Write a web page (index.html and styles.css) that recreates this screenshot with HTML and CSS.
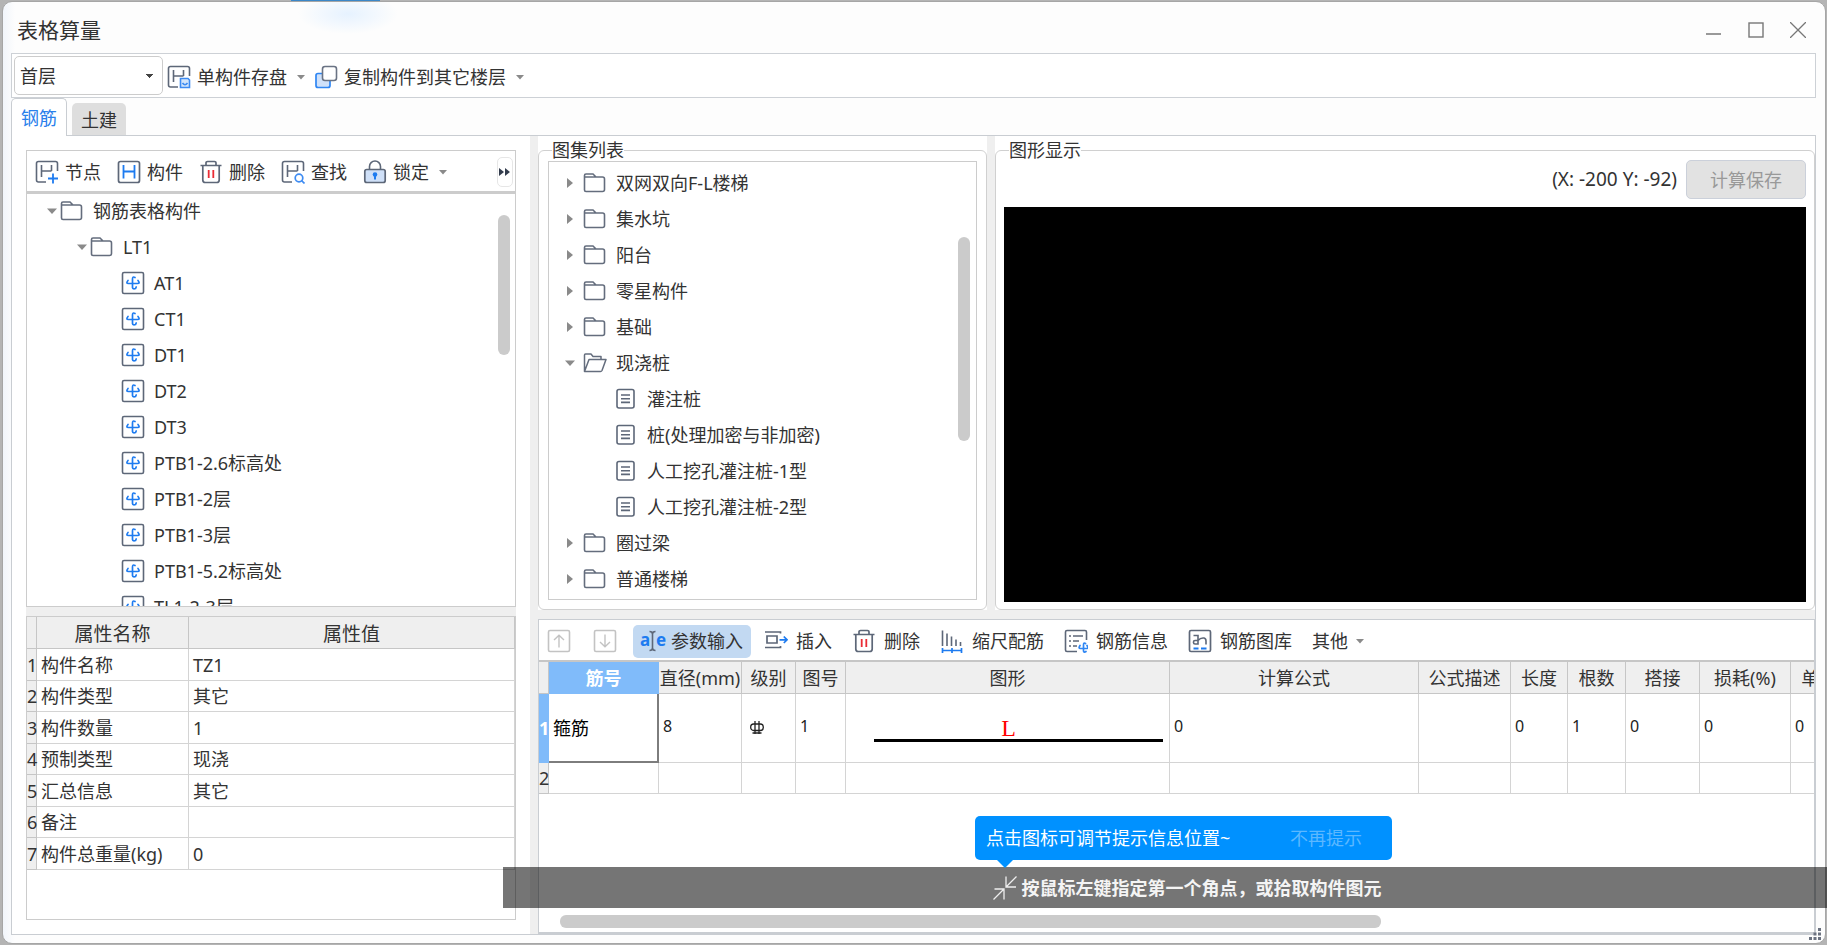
FILE: index.html
```html
<!DOCTYPE html>
<html lang="zh-CN">
<head>
<meta charset="utf-8">
<title>表格算量</title>
<link rel="stylesheet" href="styles.css">
</head>
<body>
<svg class="sprite" aria-hidden="true">
  <defs>
    <symbol id="i-save" viewBox="0 0 24 24"><g fill="none" stroke="#5d6778" stroke-width="1.6"><path d="M11 22H3.500Q1.500 22 1.500 20V3.500Q1.500 1.500 3.500 1.500H20.500Q22.500 1.500 22.500 3.500V11"/><path d="M6.500 5V17M16.500 5V11M6.500 11H16.500"/></g><path d="M13.500 13.500H21L22.500 15V22.500H13.500Z" fill="#d3e5fb" stroke="#3d8bf2" stroke-width="1.600"/><path d="M15.500 18Q18 21.500 20.500 18" fill="none" stroke="#3d8bf2" stroke-width="1.600"/></symbol>
    <symbol id="i-copy" viewBox="0 0 24 24"><rect x="2" y="8.500" width="14" height="14" rx="2" fill="#cfe1fa" stroke="#2f86f3" stroke-width="1.700"/><rect x="8.500" y="1.500" width="14" height="14" rx="2.500" fill="#fff" stroke="#6a7384" stroke-width="1.600"/></symbol>
    <symbol id="i-node" viewBox="0 0 24 24"><g fill="none" stroke="#5d6778" stroke-width="1.600"><path d="M11 22H3.500Q1.500 22 1.500 20V3.500Q1.500 1.500 3.500 1.500H20.500Q22.500 1.500 22.500 3.500V11"/><path d="M6.500 5V17M16.500 5V11M6.500 11H16.500"/></g><path d="M18 13.500V23.500M13 18.500H23" stroke="#1d7bf0" stroke-width="1.800"/></symbol>
    <symbol id="i-comp" viewBox="0 0 24 24"><rect x="1.500" y="1.500" width="21" height="21" rx="2" fill="none" stroke="#5d6778" stroke-width="1.700"/><path d="M6.500 5V18.500M17.500 5V18.500M6.500 11.500H17.500" fill="none" stroke="#1d7bf0" stroke-width="1.800"/></symbol>
    <symbol id="i-trash" viewBox="0 0 24 24"><g fill="none" stroke="#5d6778" stroke-width="1.700"><path d="M1.500 5.500H22.500M7 5V2.700Q7 1.500 8.500 1.500H15.500Q17 1.500 17 2.700V5"/><path d="M3.800 5.500V20Q3.800 22.500 6.300 22.500H17.700Q20.200 22.500 20.200 20V5.500"/></g><path d="M9.700 10V18M14.300 10V18" stroke="#ea2c35" stroke-width="1.800"/></symbol>
    <symbol id="i-find" viewBox="0 0 24 24"><g fill="none" stroke="#5d6778" stroke-width="1.600"><path d="M11 22H3.500Q1.500 22 1.500 20V3.500Q1.500 1.500 3.500 1.500H20.500Q22.500 1.500 22.500 3.500V11"/><path d="M6.500 5V17M16.500 5V11M6.500 11H16.500"/></g><circle cx="18" cy="18" r="3.800" fill="#fff" stroke="#3d8bf2" stroke-width="1.700"/><path d="M20.500 20.500L23.500 23.500" stroke="#3d8bf2" stroke-width="1.700"/></symbol>
    <symbol id="i-lock" viewBox="0 0 24 24"><path d="M6.500 9V6.500A5.500 5.500 0 0 1 17.500 6.500V9" fill="none" stroke="#5d6778" stroke-width="1.600"/><rect x="1.800" y="9.500" width="20.400" height="13" rx="2" fill="#cfe0f8" stroke="#5d6778" stroke-width="1.700"/><circle cx="12" cy="14.500" r="2.300" fill="#1d7bf0"/><path d="M12 15V19.500" stroke="#1d7bf0" stroke-width="2"/></symbol>
    <symbol id="i-folder" viewBox="0 0 24 24"><path d="M1.500 19V4.500Q1.500 3 3 3H10L13 6H19.500Q21.500 6 21.500 8V18.500Q21.500 20.500 19.500 20.500H3Q1.500 20.500 1.500 19ZM1.500 6H13" fill="none" stroke="#646d7d" stroke-width="1.600"/></symbol>
    <symbol id="i-open" viewBox="0 0 24 24"><path d="M1.500 20.500V4Q1.500 3 2.500 3H8L10 5.500H18V8.500M1.500 20.500L6 8.500H23L19 19.500Q18.500 20.500 17.500 20.500Z" fill="none" stroke="#646d7d" stroke-width="1.500" stroke-linejoin="round"/></symbol>
    <symbol id="i-doc" viewBox="0 0 24 24"><rect x="3" y="2.500" width="17" height="18.500" rx="2" fill="none" stroke="#5d6778" stroke-width="1.600"/><path d="M7 8H16M7 11.700H16M7 15.400H16" stroke="#5d6778" stroke-width="1.600"/></symbol>
    <symbol id="i-item" viewBox="0 0 24 24"><rect x="1.500" y="1.500" width="21" height="21" rx="1.500" fill="none" stroke="#5d6778" stroke-width="1.600"/><path d="M14 6.500Q11.500 5 11.500 8V16.500Q12 18.500 14.500 17.500L15.200 16M7 9.500Q4.500 12.500 7.500 12.500H16.500Q19.500 12.500 17 9.500" fill="none" stroke="#1d7bf0" stroke-width="1.700" stroke-linecap="round"/></symbol>
    <symbol id="i-up" viewBox="0 0 24 24"><rect x="1.500" y="1.500" width="21" height="21" rx="1.500" fill="none" stroke="#c3c3c3" stroke-width="1.600"/><path d="M12 18.500V6.500M7 11L12 6.200L17 11" fill="none" stroke="#c3c3c3" stroke-width="1.400"/></symbol>
    <symbol id="i-down" viewBox="0 0 24 24"><rect x="1.500" y="1.500" width="21" height="21" rx="1.500" fill="none" stroke="#c3c3c3" stroke-width="1.600"/><path d="M12 5.500V17.500M7 13L12 17.800L17 13" fill="none" stroke="#c3c3c3" stroke-width="1.400"/></symbol>
    <symbol id="i-insert" viewBox="0 0 24 24"><path d="M1 3H16.500V4.500M1 18.500H16.500V17M3 7H13V14H3Z" fill="none" stroke="#5d6778" stroke-width="1.700"/><path d="M15.500 10.800H23M19.800 7.500L23 10.800L19.800 14" fill="none" stroke="#1d7bf0" stroke-width="1.700"/></symbol>
    <symbol id="i-scale" viewBox="0 0 24 24"><path d="M2.500 1.500V17M7 4.500V17M11.500 7.500V17M16 10.500V17M20.500 13V17" stroke="#5d6778" stroke-width="1.600"/><path d="M2 21.500H22M2.500 19V24M12 19V24M21.500 19V24" stroke="#1d7bf0" stroke-width="1.700"/></symbol>
    <symbol id="i-info" viewBox="0 0 24 24"><path d="M13 22.500H3Q1.500 22.500 1.500 21V3Q1.500 1.500 3 1.500H21Q22.500 1.500 22.500 3V11M5 7H7M9 7H19M5 12H7M9 12H15M5 17H7M9 17H13" fill="none" stroke="#5d6778" stroke-width="1.600"/><path d="M21.500 14.500Q19.500 13 19.500 16V22Q20 24 22 22.500M16 16.500Q14 19.500 16.500 19.500H22.500Q25 19.500 23 16.500" fill="none" stroke="#2f86f3" stroke-width="1.700" stroke-linecap="round"/></symbol>
    <symbol id="i-lib" viewBox="0 0 24 24"><rect x="1.500" y="1.500" width="21" height="21" rx="1.500" fill="none" stroke="#5d6778" stroke-width="1.700"/><path d="M5.500 6.500H10V15H7Q5.500 15 5.500 13.500V13Q5.500 11.500 7 11.500H10M10 11.500Q12.500 8.500 16 9Q18 9.500 18 12V15.500" fill="none" stroke="#5d6778" stroke-width="1.600"/><path d="M5.500 19.500H10.500M13 19.500H18.500" stroke="#1d7bf0" stroke-width="1.800"/></symbol>
    <symbol id="i-shrink" viewBox="0 0 24 24"><path d="M23.500 .5L13.500 10.500M13 .5V11H23M.5 23.500L10.500 13.500M1.500 13H11V23.500" fill="none" stroke="#eee" stroke-width="1.300"/></symbol>
    <symbol id="i-tri-down" viewBox="0 0 10 10"><path d="M0 2.500H10L5 8Z" fill="#8a8a8a"/></symbol>
    <symbol id="i-tri-right" viewBox="0 0 10 10"><path d="M2 0L8 5L2 10Z" fill="#8a8a8a"/></symbol>
  </defs>
</svg>

<div class="window">
  <header class="titlebar">
    <h1 class="title">表格算量</h1>
    <div class="controls">
      <button class="control" aria-label="最小化"><svg viewBox="0 0 16 16"><path d="M0 12H15" stroke="#777" stroke-width="1.500"/></svg></button>
      <button class="control" aria-label="最大化"><svg viewBox="0 0 16 16"><rect x="1" y="1" width="14" height="14" fill="none" stroke="#777" stroke-width="1.400"/></svg></button>
      <button class="control" aria-label="关闭"><svg viewBox="0 0 16 16"><path d="M0 0L16 16M16 0L0 16" stroke="#777" stroke-width="1.300"/></svg></button>
    </div>
  </header>

  <div class="mainbar">
    <select class="floor" aria-label="楼层"><option>首层</option></select>
    <button class="tool"><svg class="icon"><use href="#i-save"/></svg>单构件存盘<svg class="caret"><use href="#i-tri-down"/></svg></button>
    <button class="tool"><svg class="icon"><use href="#i-copy"/></svg>复制构件到其它楼层<svg class="caret"><use href="#i-tri-down"/></svg></button>
  </div>

  <nav class="tabs">
    <button class="tab tab-active">钢筋</button>
    <button class="tab">土建</button>
  </nav>

  <main class="page">
    <section class="side">
      <div class="sidebar-tools">
        <button class="tool"><svg class="icon"><use href="#i-node"/></svg>节点</button>
        <button class="tool"><svg class="icon"><use href="#i-comp"/></svg>构件</button>
        <button class="tool"><svg class="icon"><use href="#i-trash"/></svg>删除</button>
        <button class="tool"><svg class="icon"><use href="#i-find"/></svg>查找</button>
        <button class="tool"><svg class="icon"><use href="#i-lock"/></svg>锁定<svg class="caret"><use href="#i-tri-down"/></svg></button>
        <button class="more" aria-label="更多"><svg viewBox="0 0 12 10"><path d="M0 1L5 5L0 9ZM6 1L11 5L6 9Z" fill="#333c4d"/></svg></button>
      </div>
      <div class="tree-box">
        <ul class="tree">
          <li class="row level-1"><button class="twist" aria-label="折叠"><svg><use href="#i-tri-down"/></svg></button><svg class="icon"><use href="#i-folder"/></svg><span>钢筋表格构件</span></li>
          <li class="row level-2"><button class="twist" aria-label="折叠"><svg><use href="#i-tri-down"/></svg></button><svg class="icon"><use href="#i-folder"/></svg><span>LT1</span></li>
          <li class="row level-3"><svg class="icon"><use href="#i-item"/></svg><span>AT1</span></li>
          <li class="row level-3"><svg class="icon"><use href="#i-item"/></svg><span>CT1</span></li>
          <li class="row level-3"><svg class="icon"><use href="#i-item"/></svg><span>DT1</span></li>
          <li class="row level-3"><svg class="icon"><use href="#i-item"/></svg><span>DT2</span></li>
          <li class="row level-3"><svg class="icon"><use href="#i-item"/></svg><span>DT3</span></li>
          <li class="row level-3"><svg class="icon"><use href="#i-item"/></svg><span>PTB1-2.6标高处</span></li>
          <li class="row level-3"><svg class="icon"><use href="#i-item"/></svg><span>PTB1-2层</span></li>
          <li class="row level-3"><svg class="icon"><use href="#i-item"/></svg><span>PTB1-3层</span></li>
          <li class="row level-3"><svg class="icon"><use href="#i-item"/></svg><span>PTB1-5.2标高处</span></li>
          <li class="row level-3"><svg class="icon"><use href="#i-item"/></svg><span>TL1-2-3层</span></li>
        </ul>
        <div class="thumb thumb-side"></div>
      </div>
      <div class="split-h"></div>
      <div class="props">
        <table class="grid props-grid">
          <colgroup><col class="c-num"><col class="c-name"><col></colgroup>
          <thead><tr><th></th><th>属性名称</th><th>属性值</th></tr></thead>
          <tbody>
            <tr><th>1</th><td>构件名称</td><td>TZ1</td></tr>
            <tr><th>2</th><td>构件类型</td><td>其它</td></tr>
            <tr><th>3</th><td>构件数量</td><td>1</td></tr>
            <tr><th>4</th><td>预制类型</td><td>现浇</td></tr>
            <tr><th>5</th><td>汇总信息</td><td>其它</td></tr>
            <tr><th>6</th><td>备注</td><td></td></tr>
            <tr><th>7</th><td>构件总重量(kg)</td><td>0</td></tr>
          </tbody>
        </table>
      </div>
    </section>

    <div class="split-v"></div>

    <div class="work">
      <div class="upper">
        <fieldset class="group atlas">
          <legend>图集列表</legend>
          <div class="atlas-box">
            <ul class="tree">
              <li class="row folder"><button class="twist" aria-label="展开"><svg><use href="#i-tri-right"/></svg></button><svg class="icon"><use href="#i-folder"/></svg><span>双网双向F-L楼梯</span></li>
              <li class="row folder"><button class="twist" aria-label="展开"><svg><use href="#i-tri-right"/></svg></button><svg class="icon"><use href="#i-folder"/></svg><span>集水坑</span></li>
              <li class="row folder"><button class="twist" aria-label="展开"><svg><use href="#i-tri-right"/></svg></button><svg class="icon"><use href="#i-folder"/></svg><span>阳台</span></li>
              <li class="row folder"><button class="twist" aria-label="展开"><svg><use href="#i-tri-right"/></svg></button><svg class="icon"><use href="#i-folder"/></svg><span>零星构件</span></li>
              <li class="row folder"><button class="twist" aria-label="展开"><svg><use href="#i-tri-right"/></svg></button><svg class="icon"><use href="#i-folder"/></svg><span>基础</span></li>
              <li class="row folder"><button class="twist" aria-label="折叠"><svg><use href="#i-tri-down"/></svg></button><svg class="icon"><use href="#i-open"/></svg><span>现浇桩</span></li>
              <li class="row leaf"><svg class="icon"><use href="#i-doc"/></svg><span>灌注桩</span></li>
              <li class="row leaf"><svg class="icon"><use href="#i-doc"/></svg><span>桩(处理加密与非加密)</span></li>
              <li class="row leaf"><svg class="icon"><use href="#i-doc"/></svg><span>人工挖孔灌注桩-1型</span></li>
              <li class="row leaf"><svg class="icon"><use href="#i-doc"/></svg><span>人工挖孔灌注桩-2型</span></li>
              <li class="row folder"><button class="twist" aria-label="展开"><svg><use href="#i-tri-right"/></svg></button><svg class="icon"><use href="#i-folder"/></svg><span>圈过梁</span></li>
              <li class="row folder"><button class="twist" aria-label="展开"><svg><use href="#i-tri-right"/></svg></button><svg class="icon"><use href="#i-folder"/></svg><span>普通楼梯</span></li>
            </ul>
            <div class="thumb thumb-atlas"></div>
          </div>
        </fieldset>
        <div class="split-v"></div>
        <fieldset class="group view">
          <legend>图形显示</legend>
          <div class="view-head">
            <output>(X: -200 Y: -92)</output>
            <button class="calc" disabled>计算保存</button>
          </div>
          <div class="canvas"></div>
        </fieldset>
      </div>
      <div class="split-h"></div>
      <section class="rebar">
        <div class="rebar-tools">
          <div class="moves">
            <button class="tool" aria-label="上移" disabled><svg class="icon"><use href="#i-up"/></svg></button>
            <button class="tool" aria-label="下移" disabled><svg class="icon"><use href="#i-down"/></svg></button>
          </div>
          <button class="tool tool-on"><svg class="icon" viewBox="0 0 24 24"><text class="glyph" x="-1" y="17">a</text><text class="glyph" x="15" y="17">e</text><path d="M8.500 2.500Q11.500 2.500 11.500 5V19Q11.500 21.500 8.500 21.500M14.500 2.500Q11.500 2.500 11.500 5M11.500 19Q11.500 21.500 14.500 21.500" fill="none" stroke="#5d6778" stroke-width="1.600"/></svg>参数输入</button>
          <button class="tool"><svg class="icon"><use href="#i-insert"/></svg>插入</button>
          <button class="tool"><svg class="icon"><use href="#i-trash"/></svg>删除</button>
          <button class="tool"><svg class="icon"><use href="#i-scale"/></svg>缩尺配筋</button>
          <button class="tool"><svg class="icon"><use href="#i-info"/></svg>钢筋信息</button>
          <button class="tool"><svg class="icon"><use href="#i-lib"/></svg>钢筋图库</button>
          <button class="tool">其他<svg class="caret"><use href="#i-tri-down"/></svg></button>
        </div>
        <div class="rebar-scroll">
          <table class="grid rebar-grid">
            <colgroup><col class="c-num"><col class="c-bar"><col class="c-dia"><col class="c-grade"><col class="c-fig"><col class="c-shape"><col class="c-formula"><col class="c-desc"><col class="c-len"><col class="c-count"><col class="c-lap"><col class="c-loss"><col class="c-unit"></colgroup>
            <thead><tr><th></th><th class="picked">筋号</th><th>直径(mm)</th><th>级别</th><th>图号</th><th>图形</th><th>计算公式</th><th>公式描述</th><th>长度</th><th>根数</th><th>搭接</th><th>损耗(%)</th><th>单重(kg)</th></tr></thead>
            <tbody>
              <tr class="first">
                <th class="picked">1</th><td class="focus">箍筋</td><td>8</td>
                <td class="grade"><svg viewBox="0 0 14 14" role="img" aria-label="三级钢"><path d="M5 0V13M9 0V13M2.500 12H11.500" fill="none" stroke="#222" stroke-width="1.300"/><rect x=".7" y="3" width="12.600" height="6.500" rx="3" fill="none" stroke="#222" stroke-width="1.300"/></svg></td>
                <td>1</td><td class="shape"><span class="bar">L</span></td><td>0</td><td></td><td>0</td><td>1</td><td>0</td><td>0</td><td>0</td>
              </tr>
              <tr><th>2</th><td></td><td></td><td></td><td></td><td></td><td></td><td></td><td></td><td></td><td></td><td></td><td></td></tr>
            </tbody>
          </table>
        </div>
        <div class="hbar"><div class="hthumb"></div></div>
      </section>
    </div>
  </main>
  <svg class="grip" viewBox="0 0 12 12" aria-hidden="true"><path d="M9 0h3v3h-3zM9 4.500h3v3h-3zM9 9h3v3h-3zM4.500 4.500h3v3h-3zM4.500 9h3v3h-3zM0 9h3v3h-3z" fill="#6b7280"/></svg>
</div>

<div class="hint">
  <div class="tip"><span>点击图标可调节提示信息位置~</span><button class="dismiss">不再提示</button></div>
  <svg class="icon"><use href="#i-shrink"/></svg>
  <span>按鼠标左键指定第一个角点，或拾取构件图元</span>
</div>
</body>
</html>
```

FILE: styles.css
```css
* { box-sizing: border-box; }

body {
  margin: 0;
  height: 100vh;
  padding: 1px 1px 1px 2px;
  overflow: hidden;
  position: relative;
  background: #b4b4b4 linear-gradient(#3b87c8, #3b87c8) no-repeat 291px 0 / 89px 2px;
  font: 18px/24px "Noto Sans", "Noto Sans CJK SC", sans-serif;
  color: #333;
}

button, select {
  font: inherit;
  color: inherit;
  background: none;
  border: 0;
  padding: 0;
  white-space: nowrap;
}

.sprite { position: absolute; width: 0; height: 0; }
.icon { width: 24px; height: 24px; flex: none; overflow: visible; }
.caret { width: 8px; height: 8px; flex: none; }

.window {
  height: 100%;
  display: flex;
  flex-direction: column;
  position: relative;
  padding: 0 9px 8px 8px;
  border: 1px solid #a6a6a6;
  border-radius: 10px;
  background:
    radial-gradient(ellipse 50px 20px at 345px 12px, #e6f2ff, transparent),
    linear-gradient(90deg, #f1f5fb, #fdfdfd 12px);
}

.titlebar {
  height: 51px;
  flex: none;
  display: flex;
  align-items: center;
  justify-content: space-between;
  padding: 4px 2px 0 6px;
}
.title { margin: 0; font-size: 21px; line-height: 28px; font-weight: 400; }
.controls { display: flex; gap: 10px; }
.control { width: 32px; height: 32px; display: flex; align-items: center; justify-content: center; }
.control svg { width: 16px; height: 16px; }

.mainbar {
  height: 45px;
  flex: none;
  display: flex;
  align-items: center;
  padding-left: 2px;
  border: 1px solid #cdd1d6;
  background: #fff;
}
.floor {
  width: 149px;
  height: 39px;
  margin-right: 4px;
  padding: 0 10px 0 5px;
  border: 1px solid #ccc;
  border-radius: 5px;
  appearance: none;
  background: #fff conic-gradient(from -45deg at 50% 100%, #444 0 90deg, transparent 90deg) no-repeat right 9px center / 7px 4px;
}

.tool { display: flex; align-items: center; gap: 6px; }
.mainbar .tool { margin-right: 9px; padding-top: 2px; }
.mainbar .caret { margin-left: 4px; }

.tabs { height: 37px; flex: none; display: flex; align-items: flex-end; gap: 5px; }
.tab { height: 32px; padding: 2px 9px 0; border-radius: 5px 5px 0 0; background: #dedede; }
.tab-active {
  position: relative;
  height: 38px;
  margin-bottom: -1px;
  padding: 0 9px;
  border: 1px solid #c9cdd2;
  border-bottom: 0;
  background: #fff;
  color: #2a80eb;
}

.page {
  flex: 1;
  min-height: 0;
  display: flex;
  border: 1px solid #c9cdd2;
  background: #fff;
}

.split-v { width: 8px; flex: none; background: #efefef; }
.split-h { height: 9px; flex: none; background: #efefef; }

.side {
  width: 518px;
  flex: none;
  display: flex;
  flex-direction: column;
  padding: 14px;
}
.sidebar-tools {
  height: 42px;
  flex: none;
  display: flex;
  align-items: center;
  gap: 16px;
  padding: 2px 2px 0 8px;
  border: 1px solid #ccc;
}
.more {
  width: 16px;
  height: 30px;
  margin-left: auto;
  border: 1px solid #e6e6e6;
  border-radius: 5px;
}
.more svg { width: 12px; height: 10px; display: block; margin: auto; }
.sidebar-tools .caret { margin-left: 4px; }

.tree-box {
  flex: 1;
  min-height: 0;
  overflow: hidden;
  position: relative;
  border: 1px solid #ccc;
  border-top-width: 2px;
}
.tree { margin: 0; padding: 0; list-style: none; }
.tree-box .tree { margin-top: -1px; }
.row { height: 36px; display: flex; align-items: center; gap: 9px; white-space: nowrap; }
.twist { width: 17px; height: 20px; flex: none; margin-right: -9px; display: flex; align-items: center; justify-content: center; }
.twist svg { width: 10px; height: 10px; }
.level-1 { padding-left: 16px; }
.level-2 { padding-left: 46px; }
.level-3 { padding-left: 94px; }

.thumb { position: absolute; width: 12px; border-radius: 6px; background: #cbcbcb; }
.thumb-side { right: 5px; top: 21px; height: 140px; }
.thumb-atlas { right: 6px; top: 75px; height: 204px; }

.props { height: 304px; flex: none; border: 1px solid #ccc; }

.grid { table-layout: fixed; border-collapse: separate; border-spacing: 0; }
.grid th, .grid td { height: 32px; padding: 0; border: solid #d4d4d4; border-width: 0 1px 1px 0; overflow: hidden; white-space: nowrap; }
.grid th { background: #efefef; font-weight: 400; border-color: #c6c6c6; }
.grid td { padding-left: 4px; text-align: left; }
.grid tbody th { overflow: visible; }
.c-num { width: 10px; }
.c-name { width: 152px; }
.props-grid { width: 100%; }
.props-grid thead th { padding-top: 2px; font-size: 19px; }
.props-grid tbody th, .props-grid tbody td { height: 31px; }
.props-grid tbody tr:nth-child(odd) > * { height: 32px; }

.work { flex: 1; min-width: 0; display: flex; flex-direction: column; }
.upper { flex: 1; min-height: 0; display: flex; }

.group {
  min-width: 0;
  margin: 4px 0 0;
  padding: 1px 9px 9px;
  border: 1px solid #d0d0d0;
  border-radius: 6px;
}
.group legend { padding: 0; margin-left: 5px; line-height: 20px; }
.atlas { width: 449px; flex: none; }
.atlas legend { margin-left: 4px; }
.atlas-box {
  height: 100%;
  position: relative;
  overflow: hidden;
  padding-top: 3px;
  border: 1px solid #ccc;
}
.folder { padding-left: 12px; }
.folder .twist { margin-right: -4px; }
.leaf { padding-left: 65px; }

.view { flex: 1; padding: 0 8px 7px; }
.view-head { height: 47px; display: flex; align-items: flex-start; justify-content: flex-end; gap: 9px; }
.view-head output { padding-top: 7px; font-size: 19px; }
.calc {
  width: 120px;
  height: 39px;
  border: 1px solid #cbd0da;
  border-radius: 5px;
  background: #e2e2e2;
  color: #999;
}
.canvas { height: calc(100% - 47px); background: #000; }

.rebar {
  height: 315px;
  flex: none;
  display: flex;
  flex-direction: column;
  border: 1px solid #c9cdd2;
  border-bottom-width: 2px;
}
.rebar-tools {
  height: 42px;
  flex: none;
  display: flex;
  align-items: center;
  padding: 2px 0 0 8px;
  border-bottom: 2px solid #c6c6c6;
}
.moves { display: flex; gap: 22px; margin-right: 16px; }
.rebar-tools > .tool { height: 33px; gap: 8px; padding: 0 10px; }
.rebar-tools > .tool-on { gap: 6px; padding: 0 8px; margin-right: 3px; border-radius: 5px; background: #c2d9f2; }
.glyph { font: 700 17px "Noto Sans", sans-serif; fill: #1d7bf0; }

.rebar-scroll { flex: 1; min-height: 0; overflow: hidden; }
.rebar-grid { width: 1341px; }
.rebar-grid tbody td { color: #222; font-size: 16px; }
.rebar-grid .first > * { height: 69px; }
.rebar-grid .first td { padding-bottom: 4px; }
.rebar-grid tbody tr:last-child > * { height: 31px; }
.rebar-grid .picked { background: #80bbfa; color: #fff; font-weight: 700; border-color: #80bbfa; }
.rebar-grid .first .focus { padding-bottom: 0; font-size: 18px; color: #000; border: solid #7d7d7d; border-width: 0 2px 2px 0; }
.rebar-grid .first .grade { padding-bottom: 0; }
.grade svg { width: 14px; height: 14px; margin-left: 4px; display: block; }
.rebar-grid .first .shape { padding: 0 6px 0 28px; }
.bar {
  display: block;
  margin-top: 2px;
  border-bottom: 3px solid #000;
  font: 24px/22px "Liberation Serif", serif;
  color: #f00;
  text-align: center;
  padding-right: 20px;
}
.c-bar { width: 110px; }
.c-dia { width: 83px; }
.c-grade { width: 54px; }
.c-fig { width: 50px; }
.c-shape { width: 324px; }
.c-formula { width: 249px; }
.c-desc { width: 92px; }
.c-len { width: 57px; }
.c-count { width: 58px; }
.c-lap { width: 74px; }
.c-loss { width: 91px; }
.c-unit { width: 89px; }

.hbar { height: 17px; flex: none; padding: 0 433px 4px 21px; }
.hthumb { height: 13px; border-radius: 6px; background: #cbcbcb; }

.grip { position: absolute; right: 4px; bottom: 3px; width: 12px; height: 12px; }

.hint {
  position: absolute;
  left: 503px;
  right: 0;
  bottom: 37px;
  height: 41px;
  display: flex;
  align-items: center;
  justify-content: center;
  gap: 5px;
  padding-left: 44px;
  background: rgba(0, 0, 0, .54);
  color: #f4f4f4;
  font-weight: 700;
}
.tip {
  position: absolute;
  left: 472px;
  bottom: 48px;
  width: 417px;
  height: 44px;
  display: flex;
  align-items: center;
  justify-content: space-between;
  padding: 0 30px 0 11px;
  border-radius: 5px;
  background: #0091ff;
  color: #fff;
  font-weight: 400;
}
.tip::after {
  content: "";
  position: absolute;
  left: 22px;
  top: 100%;
  border: 8px solid transparent;
  border-top-color: #0091ff;
  border-bottom: 0;
}
.dismiss { color: #5cb8ff; }
```
